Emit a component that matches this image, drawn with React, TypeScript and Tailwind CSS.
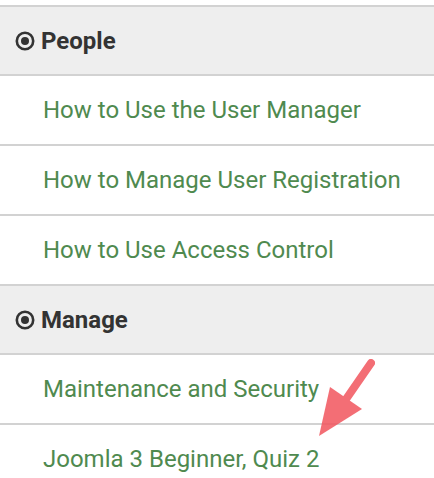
const sections = [
  { title: "People", links: ["How to Use the User Manager", "How to Manage User Registration", "How to Use Access Control"] },
  { title: "Manage", links: ["Maintenance and Security", "Joomla 3 Beginner, Quiz 2"] },
];

function RadioIcon() {
  return (
    <svg width="20" height="20" viewBox="0 0 20 20" fill="none" className="shrink-0">
      <circle cx="10" cy="10" r="8.2" stroke="#333" strokeWidth="2.6" />
      <circle cx="10" cy="10" r="4" fill="#333" />
    </svg>
  );
}

export default function App() {
  return (
    <div className="relative w-[434px] h-[478px] overflow-hidden bg-white font-['Roboto',sans-serif]">
      <div className="mt-[5px] border-t-2 border-[#d2d2d2]">
        {sections.map(s => (
          <div key={s.title}>
            <div className="h-[69px] flex items-center gap-[6px] pl-[15px] bg-[#eeeeee] border-b-2 border-[#d2d2d2]">
              <RadioIcon />
              <span className="text-[24px] font-bold text-[#333]">{s.title}</span>
            </div>
            {s.links.map(l => (
              <div key={l} className="h-[70px] flex items-center pl-[43px] border-b-2 border-[#d2d2d2]">
                <a className="text-[24px] text-[#4f8a4f] cursor-pointer">{l}</a>
              </div>
            ))}
          </div>
        ))}
      </div>
      <svg className="absolute left-0 top-0 pointer-events-none" width="434" height="478" viewBox="0 0 434 478">
        <g opacity="0.85">
          <line x1="371" y1="363" x2="342" y2="405" stroke="#f2555e" strokeWidth="8" strokeLinecap="round" />
          <polygon points="330,387 362,409 319,436" fill="#f2555e" />
        </g>
      </svg>
    </div>
  );
}
